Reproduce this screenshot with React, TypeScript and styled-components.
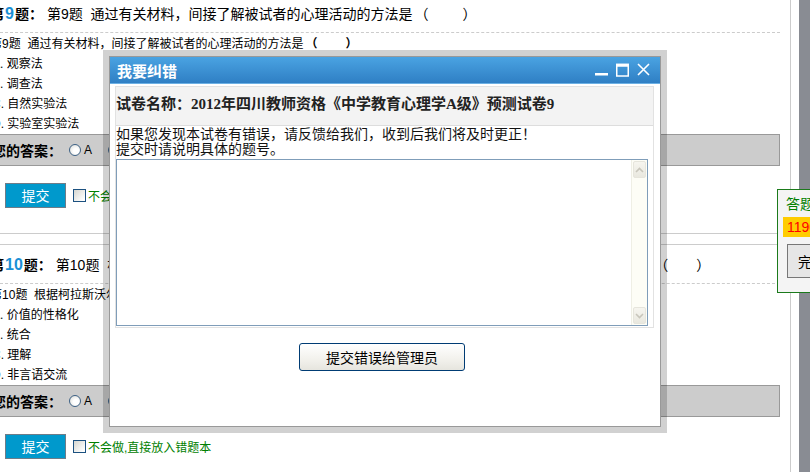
import React from "react";
import styled, { createGlobalStyle } from "styled-components";

const GlobalStyle = createGlobalStyle`
  html, body {
    margin: 0;
    padding: 0;
    background: #ffffff;
  }
  body {
    font-family: "Liberation Sans", "Noto Sans CJK SC", sans-serif;
    font-size: 12px;
    color: #000000;
  }
`;

const Page = styled.div`
  position: relative;
  width: 810px;
  height: 472px;
  overflow: hidden;
  display: flex;
  align-items: stretch;
`;

const Content = styled.div`
  flex: 0 0 801px;
  box-sizing: border-box;
  margin: -7px 8px 0 -10px;
  border-right: 1px solid #cccccc;
`;

const Rail = styled.div`
  flex: 0 0 11px;
  background: #898c93;
`;

const Block = styled.div`
  border-top: 1px solid #cccccc;
  border-bottom: 1px solid #cccccc;
  padding: 7px 10px 25px 0;
  margin-bottom: 10px;
`;

const Header = styled.div`
  line-height: 26px;
  height: 26px;
  padding-bottom: 5px;
  border-bottom: 1px dashed #cccccc;
  font-size: 14px;
  white-space: nowrap;
  overflow: hidden;
`;

const Strong = styled.b`
  font-weight: bold;
`;

const Num = styled.span`
  color: #1a8fd6;
  font-size: 16px;
  font-weight: bold;
  margin: 0 1px;
`;

const HeaderText = styled.span<{ $gap: number }>`
  margin-left: ${(p) => p.$gap}px;
`;

const Blank = styled.span<{ $shift: number; $width: number }>`
  display: inline-block;
  margin-left: ${(p) => p.$shift}px;
  & > span {
    display: inline-block;
    width: ${(p) => p.$width}px;
  }
`;

const Body = styled.div`
  padding-top: 1px;
`;

const Stem = styled.div`
  line-height: 20px;
  font-size: 12px;
  white-space: nowrap;
`;

const StemBlank = styled.b`
  margin-left: 2px;
  & > span {
    display: inline-block;
    width: 28px;
  }
`;

const Option = styled.div`
  line-height: 20px;
  font-size: 12px;
  padding-left: 2px;
  white-space: nowrap;
`;

const AnswerBar = styled.div`
  height: 30px;
  display: flex;
  align-items: center;
  background: #cccccc;
  border: 1px solid #999999;
  border-left: none;
  padding-left: 2px;
`;

const AnswerLabel = styled.span`
  font-size: 14px;
  font-weight: bold;
  margin-right: 7px;
`;

const Choice = styled.label`
  display: flex;
  align-items: center;
  margin-right: 16px;
  font-size: 12px;
`;

const Radio = styled.span`
  width: 10px;
  height: 10px;
  margin-right: 3px;
  border-radius: 50%;
  border: 1px solid #3d6185;
  background: radial-gradient(circle at 60% 60%, #ffffff 30%, #d8d8d2 100%);
`;

const Actions = styled.div`
  margin-top: 17px;
  display: flex;
  align-items: center;
  padding-left: 15px;
`;

const SubmitButton = styled.button`
  width: 61px;
  height: 25px;
  padding: 0;
  background: #0099cc;
  border: 1px solid #6e7c88;
  color: #ffffff;
  font-family: "Liberation Sans", "Noto Sans CJK SC", sans-serif;
  font-size: 14px;
  line-height: 22px;
`;

const Check = styled.span`
  width: 11px;
  height: 11px;
  margin: 0 2px 0 7px;
  border: 1px solid #1c5180;
  background: linear-gradient(135deg, #d6d6cf 0%, #ffffff 90%);
`;

const CheckText = styled.span`
  color: #008000;
  font-size: 12px;
`;

/* ---- dialog ---- */

const Frame = styled.div`
  position: absolute;
  left: 103px;
  top: 50px;
  width: 564px;
  height: 383px;
  box-sizing: border-box;
  padding: 6px;
  background: rgba(0, 0, 0, 0.18);
`;

const Dialog = styled.div`
  height: 100%;
  box-sizing: border-box;
  border: 1px solid #999999;
  background: #ffffff;
  display: flex;
  flex-direction: column;
`;

const TitleBar = styled.div`
  height: 26px;
  flex: 0 0 26px;
  display: flex;
  align-items: center;
  padding: 0 10px 0 7px;
  background: linear-gradient(#4aa3e2, #2f7fc4);
  border-bottom: 1px solid #6cb0e4;
`;

const Title = styled.span`
  flex: 1;
  color: #ffffff;
  font-size: 15px;
  font-weight: bold;
  font-family: "Noto Sans CJK SC", sans-serif;
`;

const WinButtons = styled.div`
  display: flex;
  gap: 8px;
  align-items: center;
`;

const Sheet = styled.div`
  margin: 2px 6px 0 5px;
  border: 1px solid #e2e2e2;
`;

const PaperName = styled.div`
  height: 31px;
  padding-top: 7px;
  line-height: 20px;
  background: #f3f3f3;
  border-bottom: 1px solid #dddddd;
  font-family: "Liberation Serif", "Noto Sans CJK SC", serif;
  font-size: 15px;
  font-weight: bold;
  color: #222222;
  white-space: nowrap;
`;

const Notice = styled.div`
  font-size: 14px;
  line-height: 15px;
  color: #111111;
  font-family: "Noto Sans CJK SC", sans-serif;
`;

const EditBox = styled.div`
  margin: 3px 5px 1px 0;
  height: 165px;
  display: flex;
  border: 1px solid #7f9db9;
`;

const Area = styled.textarea`
  flex: 1;
  border: none;
  outline: none;
  resize: none;
  padding: 2px;
  font-family: "Liberation Sans", "Noto Sans CJK SC", sans-serif;
`;

const Scroll = styled.div`
  flex: 0 0 15px;
  display: flex;
  flex-direction: column;
  justify-content: space-between;
  padding: 1px 0;
  background: #fdfdf6;
  border-left: 1px solid #efefe5;
`;

const ScrollBtn = styled.div`
  height: 15px;
  margin: 0 1px;
  border-radius: 2px;
  border: 1px solid #e6e5dc;
  background: linear-gradient(#f6f5ef, #e9e8df);
  display: flex;
  align-items: center;
  justify-content: center;
`;

const Footer = styled.div`
  display: flex;
  justify-content: center;
  padding-right: 6px;
  margin-top: 15px;
`;

const ReportButton = styled.button`
  width: 166px;
  height: 28px;
  border: 1px solid #003c74;
  border-radius: 3px;
  background: linear-gradient(#ffffff, #f2f1ec 60%, #e6e5de);
  font-family: "Noto Sans CJK SC", sans-serif;
  font-size: 14px;
  color: #000000;
  padding: 0;
`;

/* ---- floating answer card ---- */

const Card = styled.div`
  position: absolute;
  left: 777px;
  top: 189px;
  width: 90px;
  height: 98px;
  padding: 4px 0 0 5px;
  border: 1px solid #1b7a1b;
  background: #f4f4f4;
`;

const CardLabel = styled.div`
  padding-left: 3px;
  line-height: 20px;
  font-size: 14px;
  color: #008000;
  white-space: nowrap;
`;

const Timer = styled.div`
  margin-top: 3px;
  height: 20px;
  line-height: 20px;
  background: #ffcc00;
  color: #ff0000;
  font-size: 14px;
  padding-left: 4px;
`;

const CardButton = styled.button`
  margin: 7px 0 0 4px;
  width: 70px;
  height: 34px;
  padding: 0 0 0 10px;
  text-align: left;
  border: 1px solid #777777;
  background: #e6e6e6;
  font-family: "Noto Sans CJK SC", sans-serif;
  font-size: 14px;
  color: #000000;
`;

type Question = {
  no: number;
  stem: string;
  options: string[];
  blankShift: number;
  blankWidth: number;
};

const questions: Question[] = [
  {
    no: 9,
    stem: "通过有关材料，间接了解被试者的心理活动的方法是",
    options: ["观察法", "调查法", "自然实验法", "实验室实验法"],
    blankShift: 2,
    blankWidth: 34,
  },
  {
    no: 10,
    stem: "根据柯拉斯沃尔等人的情感目标分类，个体的价值观念已经稳定并具有一致性，这属于",
    options: ["价值的性格化", "统合", "理解", "非言语交流"],
    blankShift: 15,
    blankWidth: 28,
  },
];

const letters = ["A", "B", "C", "D"];

const QuestionBlock = ({ q }: { q: Question }) => (
  <Block>
    <Header>
      <Strong>
        第<Num>{q.no}</Num>题：
      </Strong>
      <HeaderText $gap={4}>
        第{q.no}题&nbsp; {q.stem}
      </HeaderText>
      <Blank $shift={q.blankShift} $width={q.blankWidth}>
        （<span />）
      </Blank>
    </Header>
    <Body>
      <Stem>
        第{q.no}题&nbsp; {q.stem}
        <StemBlank>
          （<span />）
        </StemBlank>
      </Stem>
      {q.options.map((o, i) => (
        <Option key={o}>
          {letters[i]}. {o}
        </Option>
      ))}
    </Body>
    <AnswerBar>
      <AnswerLabel>您的答案：</AnswerLabel>
      {letters.map((l) => (
        <Choice key={l}>
          <Radio />
          {l}
        </Choice>
      ))}
    </AnswerBar>
    <Actions>
      <SubmitButton>提交</SubmitButton>
      <Check />
      <CheckText>不会做,直接放入错题本</CheckText>
    </Actions>
  </Block>
);

const MinIcon = () => (
  <svg width="13" height="14" viewBox="0 0 13 14">
    <rect x="0" y="10" width="13" height="2.5" fill="#fff" />
  </svg>
);

const MaxIcon = () => (
  <svg width="13" height="14" viewBox="0 0 13 14">
    <rect x="0.75" y="1.5" width="11.5" height="11.5" fill="none" stroke="#fff" strokeWidth="1.5" />
    <rect x="0" y="0.75" width="13" height="3" fill="#fff" />
  </svg>
);

const CloseIcon = () => (
  <svg width="13" height="14" viewBox="0 0 13 14">
    <path d="M1 1 L12 12 M12 1 L1 12" stroke="#fff" strokeWidth="1.6" />
  </svg>
);

const Chevron = ({ up }: { up?: boolean }) => (
  <svg width="9" height="6" viewBox="0 0 9 6">
    <path
      d={up ? "M1 5 L4.5 1.5 L8 5" : "M1 1 L4.5 4.5 L8 1"}
      fill="none"
      stroke="#c8c6bb"
      strokeWidth="1.6"
    />
  </svg>
);

export default function App() {
  return (
    <>
      <GlobalStyle />
      <Page>
        <Content>
          {questions.map((q) => (
            <QuestionBlock key={q.no} q={q} />
          ))}
        </Content>
        <Rail />

        <Frame>
          <Dialog>
            <TitleBar>
              <Title>我要纠错</Title>
              <WinButtons>
                <MinIcon />
                <MaxIcon />
                <CloseIcon />
              </WinButtons>
            </TitleBar>
            <Sheet>
              <PaperName>试卷名称：2012年四川教师资格《中学教育心理学A级》预测试卷9</PaperName>
              <Notice>
                如果您发现本试卷有错误，请反馈给我们，收到后我们将及时更正！
                <br />
                提交时请说明具体的题号。
              </Notice>
              <EditBox>
                <Area />
                <Scroll>
                  <ScrollBtn>
                    <Chevron up />
                  </ScrollBtn>
                  <ScrollBtn>
                    <Chevron />
                  </ScrollBtn>
                </Scroll>
              </EditBox>
            </Sheet>
            <Footer>
              <ReportButton>提交错误给管理员</ReportButton>
            </Footer>
          </Dialog>
        </Frame>

        <Card>
          <CardLabel>答题卡</CardLabel>
          <Timer>1190</Timer>
          <CardButton>完成</CardButton>
        </Card>
      </Page>
    </>
  );
}
